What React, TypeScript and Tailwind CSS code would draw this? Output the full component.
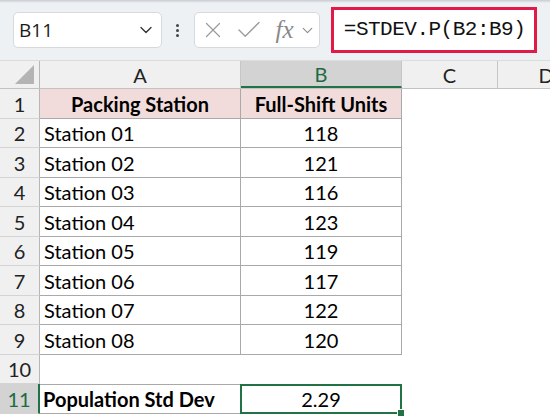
import { ChevronDown, X, Check } from "lucide-react";

const stations: [string, number][] = [
  ["Station 01", 118],
  ["Station 02", 121],
  ["Station 03", 116],
  ["Station 04", 123],
  ["Station 05", 119],
  ["Station 06", 117],
  ["Station 07", 122],
  ["Station 08", 120],
];

const cellFont = { fontFamily: "Lato, 'Open Sans', sans-serif" };

function RowHead({ n, h, active }: { n: number; h: string; active?: boolean }) {
  return (
    <div
      className={`w-[40px] shrink-0 flex items-center justify-center text-[20px] border-b border-[#d4d4d4] ${h} ${
        active
          ? "bg-[#d3d3d3] text-[#1e6b3f] border-r-2 border-r-[#217346]"
          : "bg-[#f0f0f0] text-[#222] border-r border-r-[#b7b7b7]"
      }`}
      style={cellFont}
    >
      {n}
    </div>
  );
}

export default function App(): JSX.Element {
  const heights = ["h-[30px]", "h-[29px]"];

  return (
    <div className="w-[550px] h-[418px] overflow-hidden bg-white flex flex-col">
      {/* formula bar */}
      <div className="h-[61px] shrink-0 bg-[#eef1f4] relative flex items-center px-[13px] border-b border-[#dcdcdc]">
        <div className="absolute top-0 left-0 right-0 h-[3px] bg-gradient-to-b from-[#c9ccd0] to-[#eef1f4]" />
        <div className="w-[151px] h-[36px] bg-white rounded-[5px] border border-[#d6d9dd] flex items-center justify-between pl-[5px] pr-[5px]">
          <span className="text-[19px] text-[#1b1b1b]" style={{ fontFamily: "'Open Sans', sans-serif" }}>
            B11
          </span>
          <ChevronDown size={20} strokeWidth={1.6} className="text-[#333]" />
        </div>
        <div className="w-[32px] flex flex-col items-center gap-[2px]">
          <span className="w-[3px] h-[3px] rounded-full bg-[#444]" />
          <span className="w-[3px] h-[3px] rounded-full bg-[#444]" />
          <span className="w-[3px] h-[3px] rounded-full bg-[#444]" />
        </div>
        <div className="w-[128px] h-[36px] bg-white rounded-[5px] border border-[#d6d9dd] flex items-center pl-[5px]">
          <X size={26} strokeWidth={1.1} className="text-[#9a9a9a]" />
          <Check size={30} strokeWidth={1.1} className="text-[#9a9a9a] ml-[8px]" />
          <span
            className="ml-[12px] text-[25px] italic text-[#8a8a8a] leading-none -mt-[2px]"
            style={{ fontFamily: "'Liberation Serif', serif" }}
          >
            fx
          </span>
          <ChevronDown size={17} strokeWidth={1.5} className="text-[#8a8a8a] ml-[5px]" />
        </div>
        <div className="ml-[11px] -mt-[1px] w-[209px] h-[46px] bg-white border-[3px] border-[#e11a48] flex items-center pl-[10px]">
          <span className="text-[21px] text-[#111] tracking-[-0.5px]" style={{ fontFamily: "'Liberation Mono', monospace" }}>
            =STDEV.P(B2:B9)
          </span>
        </div>
      </div>

      {/* column headers */}
      <div className="h-[28px] shrink-0 flex bg-[#f0f0f0] border-b border-[#c2c2c2] text-[20px] text-[#222]" style={cellFont}>
        <div className="w-[40px] shrink-0 border-r border-[#b7b7b7] relative">
          <div
            className="absolute right-[5px] bottom-[4px] w-[19px] h-[19px] bg-[#b4b4b4]"
            style={{ clipPath: "polygon(100% 0, 100% 100%, 0 100%)" }}
          />
        </div>
        <div className="w-[201px] shrink-0 flex items-center justify-center border-r border-[#c6c6c6]">A</div>
        <div className="w-[161px] shrink-0 flex items-center justify-center bg-[#d3d3d3] text-[#1e6b3f] border-b-2 border-[#217346] border-r border-r-[#c6c6c6]">
          B
        </div>
        <div className="w-[96px] shrink-0 flex items-center justify-center border-r border-[#c6c6c6]">C</div>
        <div className="w-[96px] shrink-0 flex items-center justify-center">D</div>
      </div>

      {/* row 1 */}
      <div className="flex shrink-0" style={cellFont}>
        <RowHead n={1} h={heights[0]} />
        <div className="w-[201px] shrink-0 h-[30px] bg-[#f2dcdb] border-r border-b border-[#a9a9a9] flex items-center justify-center font-bold text-[20px] text-black">
          Packing Station
        </div>
        <div className="w-[161px] shrink-0 h-[30px] bg-[#f2dcdb] border-r border-b border-[#a9a9a9] flex items-center justify-center font-bold text-[20px] text-black">
          Full-Shift Units
        </div>
      </div>

      {stations.map(([name, units], i) => {
        const h = heights[(i + 1) % 2];
        return (
          <div key={name} className="flex shrink-0" style={cellFont}>
            <RowHead n={i + 2} h={h} />
            <div className={`w-[201px] shrink-0 ${h} border-r border-b border-[#a9a9a9] flex items-center pl-[4px] text-[20px] text-black`}>
              {name}
            </div>
            <div className={`w-[161px] shrink-0 ${h} border-r border-b border-[#a9a9a9] flex items-center justify-center text-[20px] text-black`}>
              {units}
            </div>
          </div>
        );
      })}

      {/* row 10 */}
      <div className="flex shrink-0" style={cellFont}>
        <RowHead n={10} h={heights[1]} />
      </div>

      {/* row 11 */}
      <div className="flex shrink-0" style={cellFont}>
        <RowHead n={11} h={heights[0]} active />
        <div className="w-[201px] shrink-0 h-[30px] border-t border-r border-b border-[#a9a9a9] flex items-center pl-[3px] font-bold text-[20px] text-black">
          Population Std Dev
        </div>
        <div className="relative w-[162px] -ml-[1px] shrink-0 h-[30px] border-2 border-[#217346] flex items-center justify-center text-[20px] text-black">
          2.29
          <span className="absolute -right-[5px] -bottom-[5px] w-[8px] h-[8px] bg-[#217346] border border-white" />
        </div>
      </div>
    </div>
  );
}
